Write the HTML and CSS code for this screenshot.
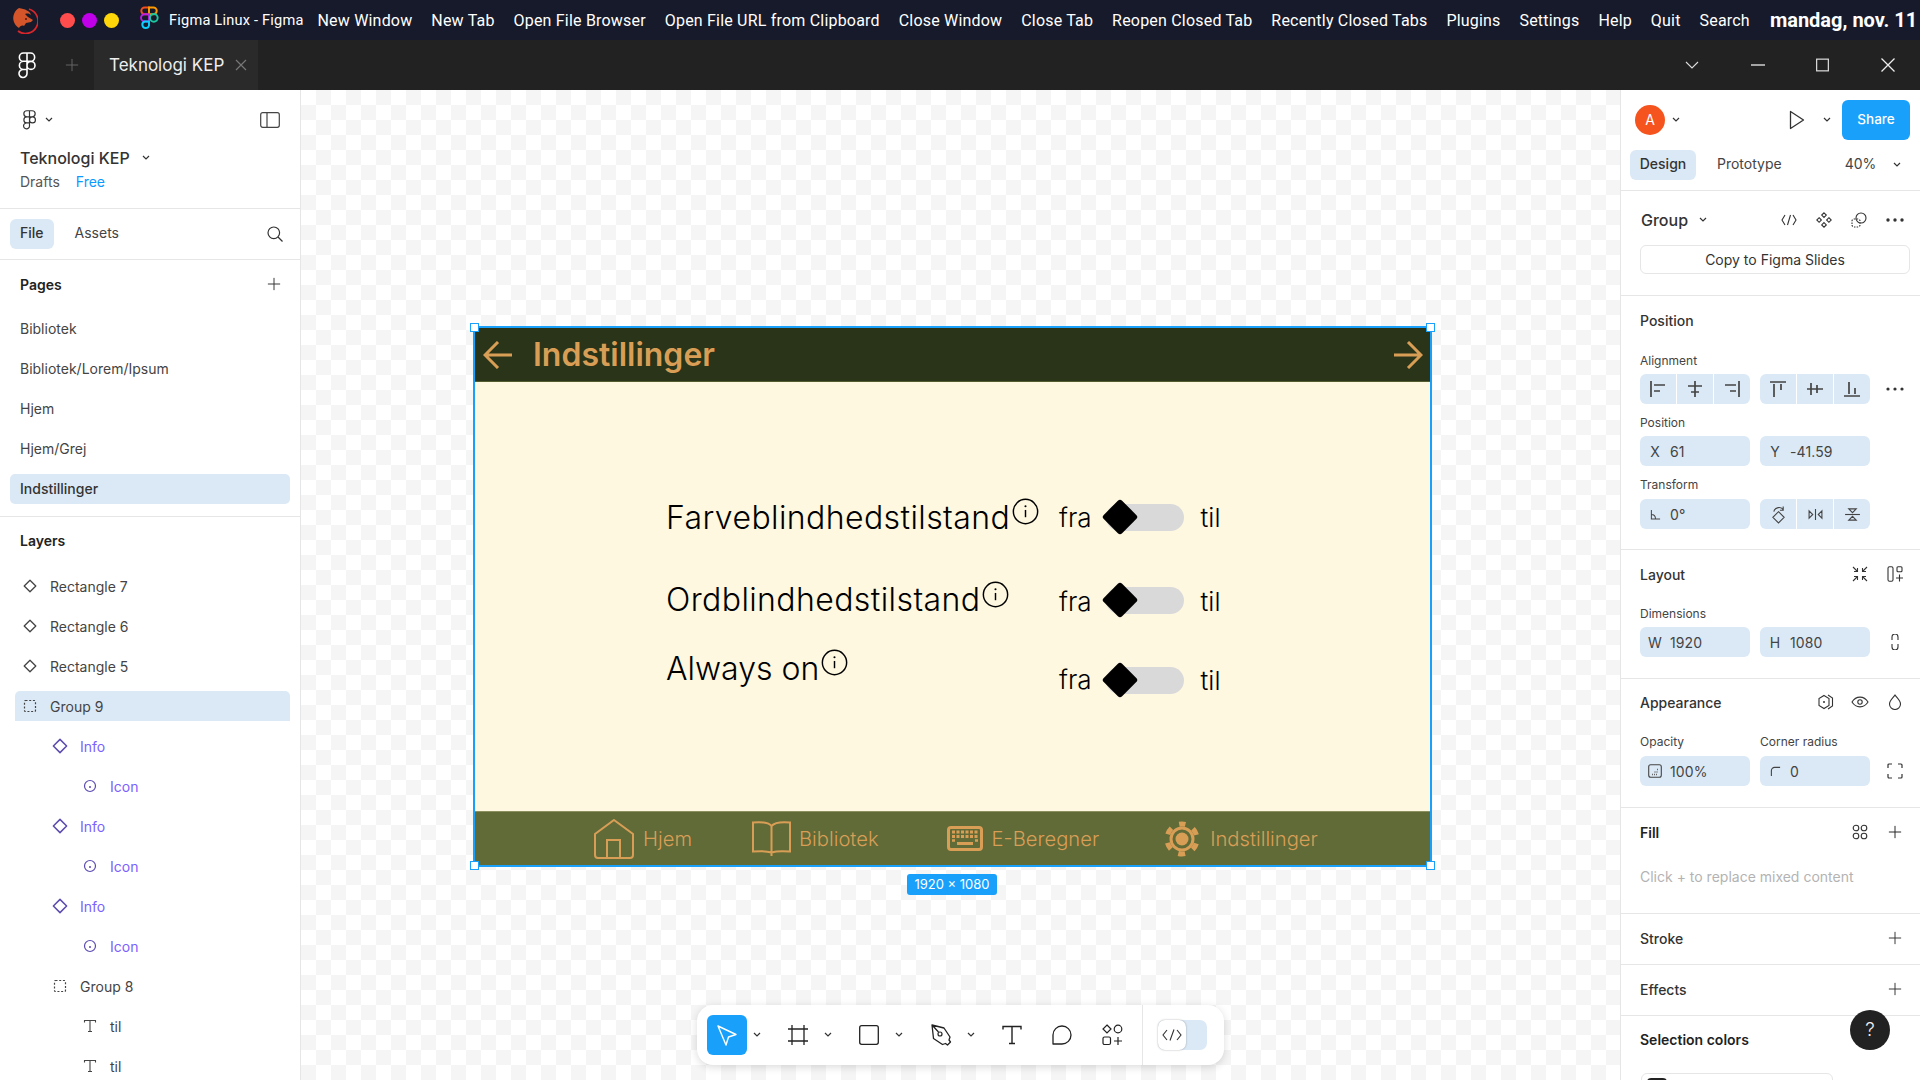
FILE: index.html
```html
<!DOCTYPE html>
<html lang="da">
<head>
<meta charset="utf-8">
<title>Teknologi KEP - Figma</title>
<link rel="stylesheet" href="styles.css">
</head>
<body>
<svg class="sprite" width="0" height="0">
  <defs>
    <symbol id="chev" viewBox="0 0 8 6"><path d="M1 1l3 3 3-3" fill="none" stroke="currentColor" stroke-width="1.2"/></symbol>
    <symbol id="plus" viewBox="0 0 16 16"><path d="M8 1v14M1 8h14" fill="none" stroke="currentColor" stroke-width="1.1"/></symbol>
    <symbol id="flogo" viewBox="0 0 18 27"><path d="M9 1H5.500a3.900 3.900 0 0 0 0 8.300H9zM9 1h3.500a3.900 3.900 0 0 1 0 8.300H9zM9 9.300H5.500a4 4 0 0 0 0 8.200H9zM9 17.500H5.500a4 4 0 1 0 3.500 4zM17 13.400a4 4 0 1 1-8 0 4 4 0 0 1 8 0z" fill="none" stroke="currentColor" stroke-width="1.600"/></symbol>
    <symbol id="diam" viewBox="0 0 14 14"><path d="M7 1.200L12.800 7 7 12.800 1.200 7z" fill="none" stroke="currentColor" stroke-width="1.300" stroke-linejoin="round"/></symbol>
    <symbol id="grp" viewBox="0 0 14 14"><rect x="1.500" y="1.500" width="11" height="11" rx="1" fill="none" stroke="currentColor" stroke-width="1.200" stroke-dasharray="2 1.700"/></symbol>
    <symbol id="circ" viewBox="0 0 14 14"><circle cx="7" cy="7" r="5.500" fill="none" stroke="currentColor" stroke-width="1.200"/><circle cx="7" cy="8" r="1" fill="currentColor"/></symbol>
    <symbol id="tee" viewBox="0 0 14 14"><path d="M1.500 3.500V1.500h11v2M7 1.500v11M5 12.500h4" fill="none" stroke="currentColor" stroke-width="1.100"/></symbol>
    <symbol id="info" viewBox="0 0 26 26"><circle cx="13" cy="13" r="11.700" fill="none" stroke="#000" stroke-width="1.400"/><path d="M13 11.500v7" stroke="#000" stroke-width="1.400"/><circle cx="13" cy="8" r="1" fill="#000"/></symbol>
  </defs>
</svg>
<div class="app">
  <header class="topbar">
    <svg class="dragon" viewBox="0 0 28 28" width="28" height="28"><path d="M19 3a12.500 12.500 0 1 1-11 22" fill="none" stroke="#d8262c" stroke-width="1.800"/><path d="M9 2c-2 1-4 3-5 6-2 5 0 11 5 14 1-2 3-3 5-2l2-3 5-1 2-2-5-3-3-3c3-1 5 0 6 1-1-4-6-6-12-7z" fill="#d4552a"/><circle cx="16" cy="13" r="1" fill="#5a1208"/></svg>
    <div class="lights"><i class="l-red"></i><i class="l-mag"></i><i class="l-yel"></i></div>
    <svg class="color-logo" viewBox="0 0 22 30" width="22" height="29"><path d="M11 1.500H6.500a3.400 3.400 0 0 0 0 7H11z" fill="none" stroke="#f24e1e" stroke-width="2"/><path d="M11 1.500h4.500a3.400 3.400 0 0 1 0 7H11z" fill="none" stroke="#ff9a00" stroke-width="2"/><path d="M11 8.500H6.500a3.500 3.500 0 0 0 0 7.500H11z" fill="none" stroke="#b620e0" stroke-width="2"/><circle cx="16" cy="12.200" r="4" fill="none" stroke="#19c8a0" stroke-width="2"/><path d="M11 16H6.500a3.500 3.500 0 1 0 4.500 4z" fill="none" stroke="#0acfff" stroke-width="2"/></svg>
    <nav class="menu">
      <span class="m-title">Figma Linux - Figma</span>
      <span>New Window</span><span>New Tab</span><span>Open File Browser</span><span>Open File URL from Clipboard</span><span>Close Window</span><span>Close Tab</span><span>Reopen Closed Tab</span><span>Recently Closed Tabs</span><span>Plugins</span><span>Settings</span><span>Help</span><span>Quit</span><span>Search</span>
    </nav>
    <span class="clock">mandag, nov. 11 |</span>
  </header>

  <div class="tabbar">
    <svg class="tb-logo" width="18" height="27"><use href="#flogo"/></svg>
    <svg class="tb-plus" width="14" height="14"><use href="#plus"/></svg>
    <div class="tab"><span>Teknologi KEP</span><svg viewBox="0 0 12 12" width="12" height="12"><path d="M1 1l10 10M11 1L1 11" fill="none" stroke="#777" stroke-width="1.200"/></svg></div>
    <div class="win">
      <svg viewBox="0 0 14 8" width="14" height="8"><path d="M1 1l6 6 6-6" fill="none" stroke="#ddd" stroke-width="1.100"/></svg>
      <svg viewBox="0 0 14 2" width="14" height="2"><path d="M0 1h14" stroke="#ddd" stroke-width="1.400"/></svg>
      <svg viewBox="0 0 14 14" width="13" height="14"><rect x=".7" y=".7" width="12.600" height="12.600" fill="none" stroke="#ddd" stroke-width="1.300"/></svg>
      <svg viewBox="0 0 14 14" width="14" height="14"><path d="M.5.5l13 13M13.500.5l-13 13" fill="none" stroke="#eee" stroke-width="1.300"/></svg>
    </div>
  </div>

  <main class="main">
    <aside class="left">
      <section class="lp-head">
        <div class="lp-top">
          <svg class="lp-logo" width="15" height="20"><use href="#flogo"/></svg>
          <svg class="chev" width="8" height="6"><use href="#chev"/></svg>
          <svg class="lp-toggle" viewBox="0 0 20 16" width="20" height="16"><rect x=".7" y=".7" width="18.600" height="14.600" rx="2" fill="none" stroke="#444" stroke-width="1.200"/><path d="M7 1v14" stroke="#444" stroke-width="1.200"/></svg>
        </div>
        <div class="lp-title"><span>Teknologi KEP</span><svg class="chev" width="8" height="6"><use href="#chev"/></svg></div>
        <div class="lp-sub"><span>Drafts</span><span class="free">Free</span></div>
      </section>
      <section class="lp-tabs">
        <span class="pill">File</span><span class="tab-off">Assets</span>
        <svg class="search" viewBox="0 0 16 16" width="16" height="16"><circle cx="6.800" cy="6.800" r="5.800" fill="none" stroke="#333" stroke-width="1.200"/><path d="M11 11l4.500 4.500" stroke="#333" stroke-width="1.200"/></svg>
      </section>
      <section class="pages">
        <div class="lp-sec-title"><span>Pages</span><svg width="14" height="14"><use href="#plus"/></svg></div>
        <div class="page">Bibliotek</div>
        <div class="page">Bibliotek/Lorem/Ipsum</div>
        <div class="page">Hjem</div>
        <div class="page">Hjem/Grej</div>
        <div class="page on">Indstillinger</div>
      </section>
      <section class="layers">
        <div class="lp-sec-title"><span>Layers</span></div>
        <div class="layer-list">
          <div class="layer"><svg width="14" height="14"><use href="#diam"/></svg><span>Rectangle 7</span></div>
          <div class="layer"><svg width="14" height="14"><use href="#diam"/></svg><span>Rectangle 6</span></div>
          <div class="layer"><svg width="14" height="14"><use href="#diam"/></svg><span>Rectangle 5</span></div>
          <div class="layer sel"><svg width="14" height="14"><use href="#grp"/></svg><span>Group 9</span></div>
          <div class="layer n1 comp"><svg width="16" height="16"><use href="#diam"/></svg><span>Info</span></div>
          <div class="layer n2 comp"><svg width="14" height="14"><use href="#circ"/></svg><span>Icon</span></div>
          <div class="layer n1 comp"><svg width="16" height="16"><use href="#diam"/></svg><span>Info</span></div>
          <div class="layer n2 comp"><svg width="14" height="14"><use href="#circ"/></svg><span>Icon</span></div>
          <div class="layer n1 comp"><svg width="16" height="16"><use href="#diam"/></svg><span>Info</span></div>
          <div class="layer n2 comp"><svg width="14" height="14"><use href="#circ"/></svg><span>Icon</span></div>
          <div class="layer n1"><svg width="14" height="14"><use href="#grp"/></svg><span>Group 8</span></div>
          <div class="layer n2"><svg width="14" height="14"><use href="#tee"/></svg><span>til</span></div>
          <div class="layer n2"><svg width="14" height="14"><use href="#tee"/></svg><span>til</span></div>
        </div>
      </section>
    </aside>

    <div class="canvas">
      <div class="frame">
        <div class="f-head">
          <svg viewBox="0 0 30 28" width="30" height="28"><path d="M29 14H2M15 1L2 14l13 13" fill="none" stroke="#d99e56" stroke-width="3"/></svg>
          <span>Indstillinger</span>
          <svg class="f-next" viewBox="0 0 30 28" width="30" height="28"><path d="M1 14h27M15 1l13 13-13 13" fill="none" stroke="#d99e56" stroke-width="3"/></svg>
        </div>
        <div class="f-body"></div>
        <div class="f-foot">
          <div class="nav nav-home"><svg viewBox="0 0 40 40" width="40" height="40"><path d="M20 1L39 15v21a3 3 0 0 1-3 3H4a3 3 0 0 1-3-3V15zM13 39V21h13v18" fill="none" stroke="#d99e56" stroke-width="2"/></svg><span>Hjem</span></div>
          <div class="nav nav-book"><svg viewBox="0 0 39 36" width="39" height="36"><path d="M19.500 31V5C16 1 6 1 1 1.500v29c6-.5 14-.5 18.500 1 4.500-1.500 12.500-1.500 18.500-1v-29C33 1 23 1 19.500 5M19.500 31v4" fill="none" stroke="#d99e56" stroke-width="2"/></svg><span>Bibliotek</span></div>
          <div class="nav nav-keys"><svg viewBox="0 0 36 25" width="36" height="25"><rect x="1.500" y="1.500" width="33" height="22" rx="2.500" fill="none" stroke="#d99e56" stroke-width="3"/><path d="M5 6h26M5 10.500h26" stroke="#d99e56" stroke-width="3" stroke-dasharray="3 1.500" fill="none"/><path d="M10 17.500h16" stroke="#d99e56" stroke-width="3"/><path d="M5 14.500h3M28 14.500h3" stroke="#d99e56" stroke-width="2.500"/></svg><span>E-Beregner</span></div>
          <div class="nav nav-gear"><svg viewBox="0 0 36 36" width="36" height="36"><circle cx="18" cy="18" r="11" fill="none" stroke="#d99e56" stroke-width="3"/><circle cx="18" cy="18" r="15" fill="none" stroke="#d99e56" stroke-width="5" stroke-dasharray="7 8.710" stroke-dashoffset="3.500" transform="rotate(-90 18 18)"/><circle cx="18" cy="18" r="6.500" fill="#d99e56"/></svg><span>Indstillinger</span></div>
        </div>

        <div class="set-label r1"><span>Farveblindhedstilstand</span><svg width="27" height="27"><use href="#info"/></svg></div>
        <div class="set-label r2"><span>Ordblindhedstilstand</span><svg width="27" height="27"><use href="#info"/></svg></div>
        <div class="set-label r3"><span>Always on</span><svg width="27" height="27"><use href="#info"/></svg></div>

        <div class="set-ctl c1"><span>fra</span><div class="toggle"><i class="knob"></i></div><span>til</span></div>
        <div class="set-ctl c2"><span>fra</span><div class="toggle"><i class="knob"></i></div><span>til</span></div>
        <div class="set-ctl c3"><span>fra</span><div class="toggle"><i class="knob"></i></div><span>til</span></div>

        <i class="handle h-tl"></i><i class="handle h-tr"></i><i class="handle h-bl"></i><i class="handle h-br"></i>
        <div class="size-tag">1920 × 1080</div>
      </div>

      <div class="toolbar">
        <div class="tgroup">
          <div class="tool active"><svg viewBox="0 0 24 24" width="24" height="24"><path d="M3 3l18 8.500-7.500 2.500-2.500 8z" fill="none" stroke="#fff" stroke-width="1.400" stroke-linejoin="round"/></svg></div>
          <svg class="tchev" width="8" height="6"><use href="#chev"/></svg>
        </div>
        <div class="tgroup">
          <div class="tool"><svg viewBox="0 0 22 22" width="22" height="22"><path d="M5 1v20M17 1v20M1 5h20M1 17h20" fill="none" stroke="#222" stroke-width="1.300"/></svg></div>
          <svg class="tchev" width="8" height="6"><use href="#chev"/></svg>
        </div>
        <div class="tgroup">
          <div class="tool"><svg viewBox="0 0 22 22" width="22" height="22"><rect x="1.700" y="1.700" width="18.600" height="18.600" rx="2" fill="none" stroke="#222" stroke-width="1.300"/></svg></div>
          <svg class="tchev" width="8" height="6"><use href="#chev"/></svg>
        </div>
        <div class="tgroup pen">
          <div class="tool"><svg viewBox="0 0 24 24" width="24" height="24"><path d="M3 2l12 3 6 9-1 3 1.500 2-3 3-2-1.500-3 1-9-6zM3 2l6.500 7" fill="none" stroke="#222" stroke-width="1.300" stroke-linejoin="round"/><circle cx="11" cy="11" r="2" fill="none" stroke="#222" stroke-width="1.200"/></svg></div>
          <svg class="tchev" width="8" height="6"><use href="#chev"/></svg>
        </div>
        <div class="tool plain"><svg viewBox="0 0 20 20" width="20" height="20"><path d="M1 4.500V1.500h18v3M10 1.500v17M7 18.500h6" fill="none" stroke="#222" stroke-width="1.400"/></svg></div>
        <div class="tool plain"><svg viewBox="0 0 22 22" width="22" height="22"><path d="M2 20V11a9 9 0 1 1 9 9z" fill="none" stroke="#222" stroke-width="1.300" stroke-linejoin="round"/></svg></div>
        <div class="tool plain"><svg viewBox="0 0 22 22" width="22" height="22"><path d="M6 1l4 4-4 4-4-4z" fill="none" stroke="#222" stroke-width="1.200"/><circle cx="17" cy="5" r="3.800" fill="none" stroke="#222" stroke-width="1.200"/><rect x="2" y="13" width="7.500" height="7.500" rx="1.500" fill="none" stroke="#222" stroke-width="1.200"/><path d="M17 13v8M13 17h8" stroke="#222" stroke-width="1.200"/></svg></div>
        <div class="tdiv"></div>
        <div class="devmode"><div class="dev-thumb"><svg viewBox="0 0 20 12" width="20" height="12"><path d="M5 1L1 6l4 5M15 1l4 5-4 5M12 .5L8 11.500" fill="none" stroke="#333" stroke-width="1.100"/></svg></div></div>
      </div>
    </div>

    <aside class="right">
      <section class="rp-top">
        <div class="rp-row">
          <span class="avatar">A</span>
          <svg class="chev ac" width="8" height="6"><use href="#chev"/></svg>
          <svg class="play" viewBox="0 0 16 20" width="16" height="20"><path d="M1.500 1.500L14.500 10 1.500 18.500z" fill="none" stroke="#333" stroke-width="1.300" stroke-linejoin="round"/></svg>
          <svg class="chev pc" width="8" height="6"><use href="#chev"/></svg>
          <span class="share">Share</span>
        </div>
        <div class="rp-tabs">
          <span class="pill design">Design</span><span class="tab-off proto">Prototype</span><span class="zoom">40%</span>
          <svg class="chev" width="8" height="6"><use href="#chev"/></svg>
        </div>
      </section>
      <section class="rp-group">
        <div class="gr-head">
          <span class="gr-name">Group</span><svg class="chev" width="8" height="6"><use href="#chev"/></svg>
          <div class="gr-icons">
            <svg viewBox="0 0 16 12" width="16" height="12"><path d="M4 1L1 6l3 5M12 1l3 5-3 5M9.500 1L6.500 11" fill="none" stroke="#333" stroke-width="1.100"/></svg>
            <svg viewBox="0 0 16 16" width="16" height="16"><path d="M8 .8l2.300 2.300L8 5.400 5.700 3.100zM3.100 5.700L5.400 8 3.100 10.300.8 8zM12.900 5.700L15.200 8l-2.300 2.300L10.600 8zM8 10.600l2.300 2.300L8 15.200l-2.300-2.300z" fill="none" stroke="#333" stroke-width="1.100"/></svg>
            <svg viewBox="0 0 16 16" width="16" height="16"><circle cx="10" cy="6" r="5" fill="none" stroke="#333" stroke-width="1.100"/><rect x="1" y="7" width="8" height="8" rx="2" fill="none" stroke="#333" stroke-width="1.100" stroke-dasharray="1.500 1.200"/></svg>
            <svg viewBox="0 0 18 4" width="18" height="4"><circle cx="2" cy="2" r="1.700" fill="#333"/><circle cx="9" cy="2" r="1.700" fill="#333"/><circle cx="16" cy="2" r="1.700" fill="#333"/></svg>
          </div>
        </div>
        <button class="copy">Copy to Figma Slides</button>
      </section>
      <section class="sec">
        <div class="sec-title"><span>Position</span></div>
        <div class="f-label l-align">Alignment</div>
        <div class="f-row">
          <div class="seg">
            <i><svg viewBox="0 0 18 16" width="18" height="16"><path d="M2 0v16M5 4h11M5 10h6" fill="none" stroke="#444" stroke-width="1.700"/></svg></i>
            <i><svg viewBox="0 0 18 16" width="18" height="16"><path d="M9 0v16M2 5h14M5 11h8" fill="none" stroke="#444" stroke-width="1.700"/></svg></i>
            <i><svg viewBox="0 0 18 16" width="18" height="16"><path d="M16 0v16M2 4h11M7 10h6" fill="none" stroke="#444" stroke-width="1.700"/></svg></i>
          </div>
          <div class="seg">
            <i><svg viewBox="0 0 18 16" width="18" height="16"><path d="M1 1h16M5 3v13M12 3v6" fill="none" stroke="#444" stroke-width="1.700"/></svg></i>
            <i><svg viewBox="0 0 18 16" width="18" height="16"><path d="M1 8h16M5 2v12M11 4v8" fill="none" stroke="#444" stroke-width="1.700"/></svg></i>
            <i><svg viewBox="0 0 18 16" width="18" height="16"><path d="M1 15h16M6 1v12M12 7v6" fill="none" stroke="#444" stroke-width="1.700"/></svg></i>
          </div>
          <svg class="side" viewBox="0 0 18 4" width="18" height="4"><circle cx="2" cy="2" r="1.600" fill="#333"/><circle cx="9" cy="2" r="1.600" fill="#333"/><circle cx="16" cy="2" r="1.600" fill="#333"/></svg>
        </div>
        <div class="f-label l-pos">Position</div>
        <div class="f-row">
          <div class="inp"><b>X</b><span>61</span></div>
          <div class="inp"><b>Y</b><span>-41.59</span></div>
        </div>
        <div class="f-label l-trans">Transform</div>
        <div class="f-row">
          <div class="inp"><b><svg viewBox="0 0 12 12" width="11" height="11"><path d="M1.500 1v10H11M1.500 6c3 0 4.500 2 4.500 5" fill="none" stroke="#444" stroke-width="1.100"/></svg></b><span>0°</span></div>
          <div class="seg">
            <i><svg viewBox="0 0 16 20" width="15" height="19"><path d="M8 7l6 6-6 6-6-6zM3 7c1-5 8-6 10-2M13 1.500V5.500H9.500" fill="none" stroke="#444" stroke-width="1.200"/></svg></i>
            <i><svg viewBox="0 0 16 12" width="15" height="11"><path d="M8 0v12" stroke="#444" stroke-width="1.200"/><path d="M1 2l4 4-4 4zM15 2l-4 4 4 4z" fill="none" stroke="#444" stroke-width="1.200"/></svg></i>
            <i><svg viewBox="0 0 16 14" width="15" height="13"><path d="M0 7h16" stroke="#444" stroke-width="1.200"/><path d="M4 1h8L8 5zM4 13h8L8 9z" fill="none" stroke="#444" stroke-width="1.200"/></svg></i>
          </div>
        </div>
      </section>
      <section class="sec layout">
        <div class="sec-title"><span>Layout</span>
          <div class="tools">
            <svg viewBox="0 0 16 16" width="16" height="16"><path d="M1 1l4.500 4.500M5.500 2v3.500H2M15 1l-4.500 4.500M10.500 2v3.500H14M1 15l4.500-4.500M5.500 14v-3.500H2M15 15l-4.500-4.500M10.500 14v-3.500H14" fill="none" stroke="#333" stroke-width="1.100"/></svg>
            <svg viewBox="0 0 16 16" width="16" height="16"><rect x="1" y=".7" width="5" height="14.600" rx="1.500" fill="none" stroke="#333" stroke-width="1.100"/><rect x="10" y=".7" width="5" height="5" rx="1" fill="none" stroke="#333" stroke-width="1.100"/><path d="M12.500 8.500v7M9 12h7" stroke="#333" stroke-width="1.100"/></svg>
          </div>
        </div>
        <div class="f-label l-dim">Dimensions</div>
        <div class="f-row">
          <div class="inp"><b>W</b><span>1920</span></div>
          <div class="inp"><b>H</b><span>1080</span></div>
          <svg class="side" viewBox="0 0 8 16" width="8" height="16"><path d="M1 6V3a3 3 0 0 1 6 0v3M1 10v3a3 3 0 0 0 6 0v-3" fill="none" stroke="#333" stroke-width="1.100"/></svg>
        </div>
      </section>
      <section class="sec appear">
        <div class="sec-title"><span>Appearance</span>
          <div class="tools">
            <svg viewBox="0 0 17 16" width="17" height="16"><path d="M7 1.500l5 3v7l-5 3-5-3v-7z" fill="none" stroke="#333" stroke-width="1.100"/><path d="M11 1l4.500 3v8L11 15" fill="none" stroke="#333" stroke-width="1.100"/><circle cx="7" cy="8" r="1" fill="#333"/></svg>
            <svg viewBox="0 0 18 12" width="18" height="12"><path d="M1 6c4-6.500 12-6.500 16 0-4 6.500-12 6.500-16 0z" fill="none" stroke="#333" stroke-width="1.100"/><circle cx="9" cy="6" r="2.200" fill="none" stroke="#333" stroke-width="1.100"/></svg>
            <svg viewBox="0 0 14 16" width="14" height="16"><path d="M7 1c-2 3-5.500 5.500-5.500 9a5.500 5.500 0 0 0 11 0C12.500 6.500 9 4 7 1z" fill="none" stroke="#333" stroke-width="1.100"/></svg>
          </div>
        </div>
        <div class="f-label l-app"><span>Opacity</span><span>Corner radius</span></div>
        <div class="f-row">
          <div class="inp op"><b><svg viewBox="0 0 14 14" width="14" height="14"><rect x=".7" y=".7" width="12.600" height="12.600" rx="2" fill="none" stroke="#444" stroke-width="1.100"/><path d="M4 10.500h6M6.500 8h4M9 5.500h1.500" stroke="#666" stroke-width="1.300" stroke-dasharray="1 1"/></svg></b><span>100%</span></div>
          <div class="inp"><b><svg viewBox="0 0 12 12" width="11" height="11"><path d="M1.500 11V5a3.500 3.500 0 0 1 3.500-3.500h6" fill="none" stroke="#444" stroke-width="1.200"/></svg></b><span>0</span></div>
          <svg class="side" viewBox="0 0 16 16" width="16" height="16"><path d="M1 5V2a1 1 0 0 1 1-1h3M11 1h3a1 1 0 0 1 1 1v3M15 11v3a1 1 0 0 1-1 1h-3M5 15H2a1 1 0 0 1-1-1v-3" fill="none" stroke="#333" stroke-width="1.200"/></svg>
        </div>
      </section>
      <section class="sec fill">
        <div class="sec-title strong"><span>Fill</span>
          <div class="tools">
            <svg viewBox="0 0 16 16" width="16" height="16"><circle cx="4" cy="4" r="2.800" fill="none" stroke="#333" stroke-width="1.100"/><circle cx="12" cy="4" r="2.800" fill="none" stroke="#333" stroke-width="1.100"/><circle cx="4" cy="12" r="2.800" fill="none" stroke="#333" stroke-width="1.100"/><circle cx="12" cy="12" r="2.800" fill="none" stroke="#333" stroke-width="1.100"/></svg>
            <svg width="14" height="14"><use href="#plus"/></svg>
          </div>
        </div>
        <div class="hint">Click + to replace mixed content</div>
      </section>
      <section class="sec short">
        <div class="sec-title"><span>Stroke</span><div class="tools"><svg width="14" height="14"><use href="#plus"/></svg></div></div>
      </section>
      <section class="sec short">
        <div class="sec-title"><span>Effects</span><div class="tools"><svg width="14" height="14"><use href="#plus"/></svg></div></div>
      </section>
      <section class="sec last">
        <div class="sec-title strong"><span>Selection colors</span></div>
        <div class="swatch-row"><i></i></div>
      </section>
      <div class="help">?</div>
    </aside>
  </main>
</div>
</body>
</html>
```

FILE: styles.css
```css
*{box-sizing:border-box}
html,body{margin:0;padding:0;height:100%}
body{font-family:Inter,"Noto Sans",sans-serif;overflow:hidden;background:#fff;color:#333}
.sprite{position:absolute}
.app{width:1920px;height:1080px;display:flex;flex-direction:column;overflow:hidden}

/* top OS bar */
.topbar{height:40px;flex:none;background:#161a2a;display:flex;align-items:center;color:#fff;padding-left:10px;white-space:nowrap;overflow:hidden}
.dragon{flex:none;margin-right:22px}
.lights{display:flex;gap:7px;margin-right:19px}
.lights i{width:15px;height:15px;border-radius:50%;display:block}
.l-red{background:#ff4d4d}
.l-mag{background:#c000e8}
.l-yel{background:#ffd60a}
.color-logo{flex:none;margin-right:9px}
.menu{display:flex;gap:18.900px;font-family:Roboto,sans-serif;font-size:16px;letter-spacing:.2px}
.m-title{font-size:14.600px;margin-right:-5px}
.clock{font-family:Roboto,sans-serif;font-weight:700;font-size:20px;margin-left:20px;flex:none}

/* window tabs */
.tabbar{height:50px;flex:none;background:#222;display:flex;align-items:center;color:#fff}
.tb-logo{margin-left:18px;color:#fff}
.tb-plus{margin-left:29px;color:#666}
.tab{margin-left:15px;width:164px;height:50px;background:#2a2a2a;display:flex;align-items:center;padding-left:15px;font-size:17px;color:#eee;gap:11px}
.win{margin-left:auto;display:flex;align-items:center;width:235px;justify-content:space-between;padding-right:25px}

/* layout */
.main{flex:1;display:flex;min-height:0}
.left{width:301px;flex:none;border-right:1px solid #e6e6e6;background:#fff;display:flex;flex-direction:column;font-size:14px;overflow:hidden}
.canvas{flex:1;position:relative;background-color:#fff;background-image:conic-gradient(#f5f5f5 25%,#fff 25% 50%,#f5f5f5 50% 75%,#fff 75%);background-size:30px 30px}
.right{width:300px;flex:none;border-left:1px solid #e6e6e6;background:#fff;position:relative;font-size:14px;overflow:hidden}

/* left panel */
.lp-head{height:119px;flex:none;padding:20px 20px 0;border-bottom:1px solid #e6e6e6}
.lp-top{display:flex;align-items:center;height:20px;color:#333}
.lp-logo{margin:0 8px 0 2px}
.lp-toggle{margin-left:auto}
.chev{color:#333;flex:none}
.lp-title{display:flex;align-items:center;height:20px;margin-top:18px;font-size:16px;font-weight:500;color:#333;gap:12px}
.lp-sub{display:flex;gap:16px;height:20px;line-height:20px;margin-top:4px;color:#555}
.free{color:#0d99ff}
.lp-tabs{height:51px;flex:none;display:flex;align-items:center;padding:0 17px 0 10px;border-bottom:1px solid #e6e6e6}
.pill{height:30px;line-height:28px;padding:0 10px;border-radius:6px;background:#dbe9f6;color:#333;font-weight:500}
.tab-off{margin-left:21px;color:#444;line-height:28px;height:30px}
.search{margin-left:auto}
.pages{height:257px;flex:none;padding:14px 0 0;border-bottom:1px solid #e6e6e6}
.lp-sec-title{height:20px;display:flex;align-items:center;justify-content:space-between;padding:0 19px 0 20px;font-weight:600;color:#222;margin-bottom:20px}
.lp-sec-title svg{color:#333}
.page{height:30px;line-height:30px;margin:0 10px 10px;padding-left:10px;border-radius:5px;color:#444}
.page.on{background:#dbe9f6;color:#333;font-weight:500}
.layers{flex:1;padding-top:13px;overflow:hidden}
.layers .lp-sec-title{margin-bottom:21px}
.layer{height:30px;margin:0 10px 10px 15px;padding-left:8px;display:flex;align-items:center;gap:13px;color:#444;border-radius:5px 5px 0 0}
.layer svg{flex:none;color:#444}
.layer.sel{background:#dbe9f6}
.layer.n1{padding-left:38px}
.layer.n2{padding-left:68px}
.layer.n1.comp{padding-left:37px;gap:12px}
.layer.comp{color:#7b61ff}
.layer.comp svg{color:#5b4bb0}

/* design frame on the canvas */
.frame{position:absolute;left:174px;top:238px;width:955px;height:537px;background:#fef8e0;outline:2px solid #18a0fb;display:flex;flex-direction:column;font-family:Inter,sans-serif}
.f-head{height:54px;flex:none;background:#2a3418;border-bottom:1px solid #525c2e;display:flex;align-items:center;padding:0 7px 0 8px;color:#d99e56;font-size:32px;font-weight:600}
.f-head span{margin-left:20px}
.f-next{margin-left:auto}
.f-body{flex:1}
.f-foot{height:54px;flex:none;background:#606b38;border-top:1px solid #8c9060;display:flex;align-items:center;color:#d99e56;font-size:20.200px;font-weight:300}
.nav{display:flex;align-items:center;gap:10px}
.nav svg{flex:none}
.nav-home{margin-left:119px;gap:9px}
.nav-book{margin-left:60px;gap:8px}
.nav-keys{margin-left:68px;gap:9px}
.nav-gear{margin-left:65px;gap:10px}

.set-label{position:absolute;left:191px;height:40px;display:flex;align-items:center;font-size:32px;font-weight:300;line-height:40px;letter-spacing:.4px;color:#000;gap:2px}
.set-label svg{margin-bottom:11px}
.r1{top:170px}
.r1 svg{margin-bottom:13px}
.r2{top:252px}
.r3{top:321px;letter-spacing:0}
.r3 svg{margin-bottom:13px}
.set-ctl{position:absolute;left:584px;height:36px;display:flex;align-items:center;font-size:26px;font-weight:300;color:#000}
.set-ctl span:last-child{margin-left:17px}
.c1{top:171px}
.c2{top:254px}
.c2 span{margin-top:2px}
.c3{top:334px}
.c3 span:first-child{margin-top:-2px}
.toggle{width:82px;height:36px;margin-left:10px;position:relative}
.toggle::before{content:"";position:absolute;left:4px;right:0;top:5px;height:27px;border-radius:14px;background:#d9d9d9}
.knob{position:absolute;left:5px;top:5px;width:26px;height:26px;background:#000;border-radius:3px;transform:rotate(45deg)}

.handle{position:absolute;width:9px;height:9px;background:#fff;border:1.500px solid #18a0fb}
.h-tl{left:-5px;top:-5px}
.h-tr{right:-5px;top:-5px}
.h-bl{left:-5px;bottom:-5px}
.h-br{right:-5px;bottom:-5px}
.size-tag{position:absolute;left:432px;top:546px;width:90px;height:21px;line-height:21px;text-align:center;background:#18a0fb;color:#fff;border-radius:3px;font-size:13px}

/* toolbar */
.toolbar{position:absolute;left:396px;top:915px;width:527px;height:60px;background:#fff;border-radius:16px;box-shadow:0 2px 8px rgba(0,0,0,.15);display:flex;align-items:center;padding-left:10px}
.tgroup{display:flex;align-items:center;margin-right:11px}
.tgroup.pen{margin-right:11px;margin-left:1px}
.tool{width:40px;height:40px;display:flex;align-items:center;justify-content:center;border-radius:6px;flex:none}
.tool.active{background:#18a0fb}
.tool.plain{margin-right:10px}
.tchev{width:20px;color:#333}
.tdiv{width:1px;height:60px;background:#e6e6e6}
.devmode{width:49px;height:30px;background:#dbe9f6;border-radius:7px;margin-left:15px}
.dev-thumb{width:28px;height:30px;background:#fff;border-radius:7px;box-shadow:0 0 2px rgba(0,0,0,.35);display:flex;align-items:center;justify-content:center}

/* right panel */
.rp-top{height:101px;padding:10px 9px 0;border-bottom:1px solid #e6e6e6}
.rp-row{display:flex;align-items:center;height:40px}
.avatar{width:30px;height:30px;margin-left:5px;border-radius:50%;background:#f5541e;color:#fff;text-align:center;line-height:30px;font-size:14px}
.ac{margin-left:7px}
.play{margin-left:109px}
.pc{margin-left:18px}
.share{margin-left:11px;width:68px;height:40px;line-height:38px;text-align:center;background:#18a0fb;color:#fff;border-radius:6px;font-weight:500;font-size:13.500px}
.rp-tabs{display:flex;align-items:center;height:30px;margin-top:10px}
.design{width:66px;text-align:center;padding:0}
.proto{margin-left:21px}
.zoom{margin-left:63px;color:#444;line-height:28px;height:30px}
.rp-tabs .chev{margin-left:17px}
.rp-group{height:105px;padding:19px 9px 0 20px;border-bottom:1px solid #e6e6e6}
.gr-head{display:flex;align-items:center;height:20px}
.gr-name{font-size:16px;font-weight:500;color:#333;margin-right:11px}
.gr-icons{margin-left:auto;display:flex;align-items:center;gap:19px;margin-right:7px}
.copy{display:block;width:270px;height:29px;margin:15px 0 0 -1px;background:#fff;border:1px solid #e6e6e6;border-radius:6px;font:14px Inter,sans-serif;color:#333;padding:0}
.sec{padding:14px 0 20px 19px;border-bottom:1px solid #e6e6e6}
.sec.layout{padding-bottom:21px}
.sec-title{height:20px;display:flex;align-items:center;font-weight:500;color:#333}
.sec-title.strong{font-weight:600;color:#222}
.tools{margin-left:auto;margin-right:7.500px;display:grid;grid-auto-flow:column;grid-auto-columns:35px;justify-items:center;align-items:center}
.f-label{height:16px;line-height:16px;font-size:12px;color:#444}
.l-align{margin:23px 0 5px}
.l-pos{margin:11px 0 5px}
.l-trans{margin:11px 0 6px}
.l-dim{margin:22px 0 5px}
.l-app{margin:22px 0 6px;display:flex}
.l-app span:first-child{width:120px}
.f-row{display:grid;grid-template-columns:110px 110px 30px;column-gap:10px;height:30px;align-items:center}
.side{justify-self:center}
.seg{height:30px;display:flex;gap:1px;border-radius:6px;overflow:hidden}
.seg i{flex:1;background:#dbe9f6;display:flex;align-items:center;justify-content:center}
.inp{height:30px;background:#dbe9f6;border-radius:6px;display:flex;align-items:center;color:#444}
.inp b{width:30px;font-weight:400;text-align:center;flex:none;display:flex;justify-content:center}
.inp span{letter-spacing:.1px}
.sec.appear{padding-top:13px;padding-bottom:21px}
.sec.fill{padding-bottom:26px}
.hint{height:20px;line-height:20px;margin-top:25px;color:#b3b3b3}
.sec.short{height:51px;padding:14px 0 0 19px}
.sec.last{border:none;padding-top:13px}
.swatch-row{width:192px;height:30px;margin:24px 0 0 1px;border:1px solid #e6e6e6;border-radius:6px;padding:4px 5px}
.swatch-row i{display:block;width:20px;height:20px;background:#222;border-radius:4px}
.help{position:absolute;left:229px;top:920px;width:40px;height:40px;border-radius:50%;background:#222;color:#eee;font-size:19px;font-weight:300;line-height:40px;text-align:center}
```
